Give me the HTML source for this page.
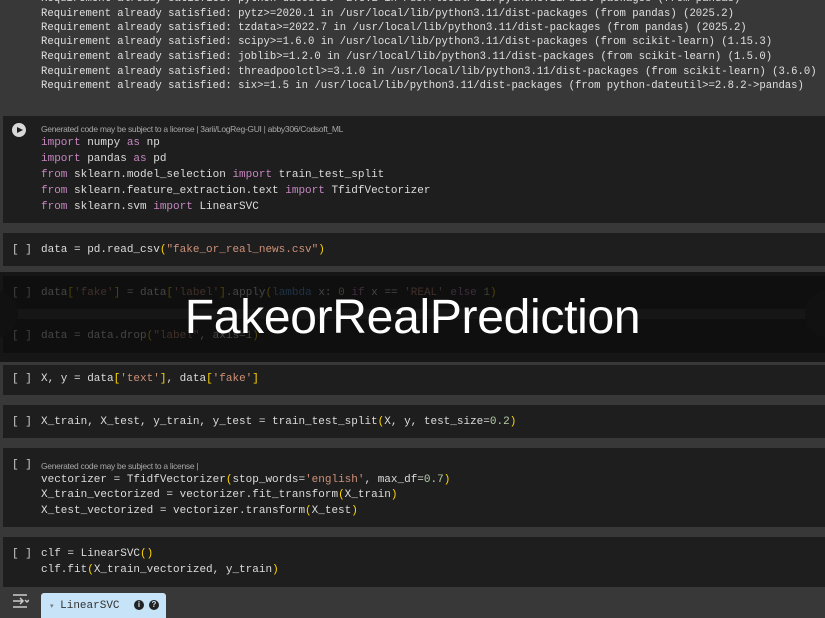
<!DOCTYPE html>
<html><head><style>
body{margin:0;width:825px;height:616px;background:#383838;position:relative;overflow:hidden;font-family:"Liberation Mono",monospace;}
.o{position:absolute;left:41px;font-size:10.6px;color:#e0e0e0;white-space:pre;line-height:14px}
.cell{position:absolute;left:3px;right:0;background:#1e1e1e}
.l{position:absolute;left:41px;font-size:11px;color:#dcdcdc;white-space:pre;line-height:15px}
.b{position:absolute;left:12px;font-size:11px;color:#cfcfcf;white-space:pre;line-height:15px}
.g{position:absolute;left:41px;font-family:"Liberation Sans",sans-serif;font-size:8.5px;color:#a8a8a8;letter-spacing:-0.3px;white-space:pre}
.k{color:#c586c0}.s{color:#ce9178}.y{color:#ffd700}.n{color:#b5cea8}.bl{color:#569cd6}
</style></head><body>
<div class="o" style="top:-8px">Requirement already satisfied: python-dateutil>=2.8.2 in /usr/local/lib/python3.11/dist-packages (from pandas)</div>
<div class="o" style="top:7px">Requirement already satisfied: pytz>=2020.1 in /usr/local/lib/python3.11/dist-packages (from pandas) (2025.2)</div>
<div class="o" style="top:21px">Requirement already satisfied: tzdata>=2022.7 in /usr/local/lib/python3.11/dist-packages (from pandas) (2025.2)</div>
<div class="o" style="top:35px">Requirement already satisfied: scipy>=1.6.0 in /usr/local/lib/python3.11/dist-packages (from scikit-learn) (1.15.3)</div>
<div class="o" style="top:50px">Requirement already satisfied: joblib>=1.2.0 in /usr/local/lib/python3.11/dist-packages (from scikit-learn) (1.5.0)</div>
<div class="o" style="top:65px">Requirement already satisfied: threadpoolctl>=3.1.0 in /usr/local/lib/python3.11/dist-packages (from scikit-learn) (3.6.0)</div>
<div class="o" style="top:79px">Requirement already satisfied: six>=1.5 in /usr/local/lib/python3.11/dist-packages (from python-dateutil>=2.8.2->pandas)</div>

<div class="cell" style="top:116px;height:107px"></div>
<div style="position:absolute;left:12px;top:123px;width:14px;height:14px;border-radius:50%;background:#d8d8d8"></div>
<div style="position:absolute;left:17px;top:127px;width:0;height:0;border-left:6px solid #1e1e1e;border-top:3.5px solid transparent;border-bottom:3.5px solid transparent"></div>
<div class="g" style="top:124px">Generated code may be subject to a license | 3arii/LogReg-GUI | abby306/Codsoft_ML</div>
<div class="l" style="top:136px"><span class="k">import</span> numpy <span class="k">as</span> np</div>
<div class="l" style="top:152px"><span class="k">import</span> pandas <span class="k">as</span> pd</div>
<div class="l" style="top:168px"><span class="k">from</span> sklearn.model_selection <span class="k">import</span> train_test_split</div>
<div class="l" style="top:184px"><span class="k">from</span> sklearn.feature_extraction.text <span class="k">import</span> TfidfVectorizer</div>
<div class="l" style="top:200px"><span class="k">from</span> sklearn.svm <span class="k">import</span> LinearSVC</div>

<div class="cell" style="top:233px;height:33px"></div>
<div class="b" style="top:243px">[ ]</div>
<div class="l" style="top:243px">data = pd.read_csv<span class="y">(</span><span class="s">"fake_or_real_news.csv"</span><span class="y">)</span></div>

<div class="cell" style="top:276px;height:33px"></div>
<div class="b" style="top:286px">[ ]</div>
<div class="l" style="top:286px">data<span class="y">[</span><span class="s">'fake'</span><span class="y">]</span> = data<span class="y">[</span><span class="s">'label'</span><span class="y">]</span>.apply<span class="y">(</span><span class="bl">lambda</span> x: <span class="n">0</span> <span class="k">if</span> x == <span class="s">'REAL'</span> <span class="k">else</span> <span class="n">1</span><span class="y">)</span></div>

<div class="cell" style="top:319px;height:34px"></div>
<div class="b" style="top:329px">[ ]</div>
<div class="l" style="top:329px">data = data.drop<span class="y">(</span><span class="s">"label"</span>, axis=<span class="n">1</span><span class="y">)</span></div>

<div style="position:absolute;left:0;right:0;top:272px;height:90px;background:rgba(10,10,10,0.72)"></div>
<div style="position:absolute;left:-30px;top:290px;width:48px;height:48px;border-radius:50%;background:#111"></div>
<div style="position:absolute;left:805px;top:290px;width:48px;height:48px;border-radius:50%;background:#111"></div>
<div style="position:absolute;left:0;width:825px;top:291px;text-align:center;font-family:'Liberation Sans',sans-serif;font-size:48px;letter-spacing:-0.3px;color:#fff;line-height:54px">FakeorRealPrediction</div>

<div class="cell" style="top:365px;height:30px"></div>
<div class="b" style="top:372px">[ ]</div>
<div class="l" style="top:372px">X, y = data<span class="y">[</span><span class="s">'text'</span><span class="y">]</span>, data<span class="y">[</span><span class="s">'fake'</span><span class="y">]</span></div>

<div class="cell" style="top:405px;height:33px"></div>
<div class="b" style="top:415px">[ ]</div>
<div class="l" style="top:415px">X_train, X_test, y_train, y_test = train_test_split<span class="y">(</span>X, y, test_size=<span class="n">0.2</span><span class="y">)</span></div>

<div class="cell" style="top:448px;height:79px"></div>
<div class="b" style="top:458px">[ ]</div>
<div class="g" style="top:461px">Generated code may be subject to a license |</div>
<div class="l" style="top:473px">vectorizer = TfidfVectorizer<span class="y">(</span>stop_words=<span class="s">'english'</span>, max_df=<span class="n">0.7</span><span class="y">)</span></div>
<div class="l" style="top:488px">X_train_vectorized = vectorizer.fit_transform<span class="y">(</span>X_train<span class="y">)</span></div>
<div class="l" style="top:504px">X_test_vectorized = vectorizer.transform<span class="y">(</span>X_test<span class="y">)</span></div>

<div class="cell" style="top:537px;height:50px"></div>
<div class="b" style="top:547px">[ ]</div>
<div class="l" style="top:547px">clf = LinearSVC<span class="y">()</span></div>
<div class="l" style="top:563px">clf.fit<span class="y">(</span>X_train_vectorized, y_train<span class="y">)</span></div>

<svg style="position:absolute;left:11px;top:592px" width="18" height="18" viewBox="0 0 18 18" fill="none" stroke="#ccc" stroke-width="1.5"><path d="M2 3h14M2 9h10M9 6l3 3-3 3M14 8l2 2 2-2M2 15h14"/></svg>
<div style="position:absolute;left:41px;top:593px;width:125px;height:25px;background:#c6e3f8;border-radius:3px 3px 0 0"></div>
<div style="position:absolute;left:50px;top:600px;font-size:11px;color:#333;white-space:pre"><span style="font-size:7px;color:#777">▾</span> LinearSVC</div>
<div style="position:absolute;left:134px;top:600px;width:10px;height:10px;border-radius:50%;background:#222;color:#c6e3f8;font:bold 8px 'Liberation Sans',sans-serif;text-align:center;line-height:10px">i</div>
<div style="position:absolute;left:149px;top:600px;width:10px;height:10px;border-radius:50%;background:#222;color:#c6e3f8;font:bold 8px 'Liberation Sans',sans-serif;text-align:center;line-height:10px">?</div>
</body></html>
